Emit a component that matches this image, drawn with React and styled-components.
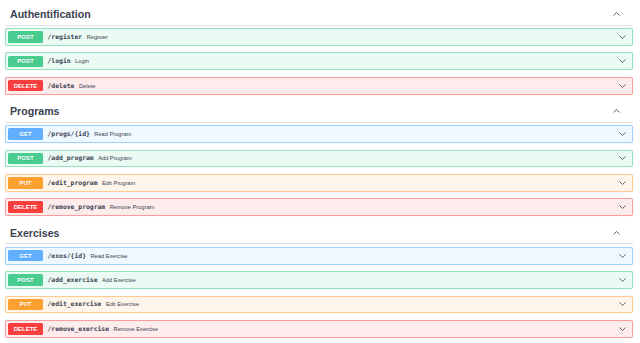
import styled, { createGlobalStyle } from "styled-components";

const GlobalStyle = createGlobalStyle`
  body {
    margin: 0;
    background: #ffffff;
    font-family: "Liberation Sans", Arial, sans-serif;
    color: #3b4151;
  }
`;

const METHODS = {
  GET: { color: "#61affe", border: "rgba(97, 175, 254, 0.55)", bg: "rgba(97, 175, 254, 0.1)" },
  POST: { color: "#49cc90", border: "rgba(73, 204, 144, 0.55)", bg: "rgba(73, 204, 144, 0.1)" },
  PUT: { color: "#fca130", border: "rgba(252, 161, 48, 0.5)", bg: "rgba(252, 161, 48, 0.1)" },
  DELETE: { color: "#f93e3e", border: "rgba(249, 62, 62, 0.45)", bg: "rgba(249, 62, 62, 0.1)" },
};

const sections = [
  {
    name: "Authentification",
    ops: [
      { method: "POST", path: "/register", desc: "Register" },
      { method: "POST", path: "/login", desc: "Login" },
      { method: "DELETE", path: "/delete", desc: "Delete" },
    ],
  },
  {
    name: "Programs",
    ops: [
      { method: "GET", path: "/progs/{id}", desc: "Read Program" },
      { method: "POST", path: "/add_program", desc: "Add Program" },
      { method: "PUT", path: "/edit_program", desc: "Edit Program" },
      { method: "DELETE", path: "/remove_program", desc: "Remove Program" },
    ],
  },
  {
    name: "Exercises",
    ops: [
      { method: "GET", path: "/exos/{id}", desc: "Read Exercise" },
      { method: "POST", path: "/add_exercise", desc: "Add Exercise" },
      { method: "PUT", path: "/edit_exercise", desc: "Edit Exercise" },
      { method: "DELETE", path: "/remove_exercise", desc: "Remove Exercise" },
    ],
  },
];

function Chevron({ up }) {
  return (
    <svg width="7" height="4" viewBox="0 0 7 4">
      <polyline
        points={up ? "0.5,3.5 3.5,0.5 6.5,3.5" : "0.5,0.5 3.5,3.5 6.5,0.5"}
        fill="none"
        stroke="#4b5060"
        strokeWidth="0.9"
      />
    </svg>
  );
}

export default function App() {
  return (
    <>
      <GlobalStyle />
      <Page>
        {sections.map((section) => (
          <Section key={section.name}>
            <TagHeader>
              <Title>{section.name}</Title>
              <ToggleUp>
                <Chevron up />
              </ToggleUp>
            </TagHeader>
            <OpList>
              {section.ops.map((op) => (
                <OpBlock key={op.path} $method={op.method}>
                  <Badge $method={op.method}>{op.method}</Badge>
                  <Path>{op.path}</Path>
                  <Desc>{op.desc}</Desc>
                  <ToggleDown>
                    <Chevron />
                  </ToggleDown>
                </OpBlock>
              ))}
            </OpList>
          </Section>
        ))}
      </Page>
    </>
  );
}

const Page = styled.div`
  padding: 4px 7px 0 5px;
`;

const Section = styled.section`
  display: flex;
  flex-direction: column;
`;

const TagHeader = styled.div`
  box-sizing: border-box;
  height: 21.5px;
  margin-bottom: 2.5px;
  padding-left: 5px;
  display: flex;
  align-items: center;
  border-bottom: 1px solid #e1e2e5;
`;

const Title = styled.h3`
  margin: 0;
  flex: 1;
  font-size: 10.6px;
  font-weight: 700;
  color: #3b4151;
`;

const ToggleUp = styled.span`
  display: flex;
  padding-right: 13px;
`;

const OpList = styled.div`
  display: flex;
  flex-direction: column;
`;

const OpBlock = styled.div`
  box-sizing: border-box;
  height: 17.8px;
  margin-bottom: 6.6px;
  padding-left: 2px;
  display: flex;
  align-items: center;
  border: 1px solid ${(p) => METHODS[p.$method].border};
  border-radius: 2px;
  background: ${(p) => METHODS[p.$method].bg};
  box-shadow: 0 0 1.5px rgba(0, 0, 0, 0.1);
`;

const Badge = styled.span`
  width: 35px;
  height: 11.5px;
  display: flex;
  align-items: center;
  justify-content: center;
  border-radius: 1.5px;
  background: ${(p) => METHODS[p.$method].color};
  color: #ffffff;
  font-size: 6px;
  font-weight: 700;
  text-shadow: 0 0.5px 0 rgba(0, 0, 0, 0.1);
`;

const Path = styled.span`
  padding: 0 4.5px;
  font-family: "DejaVu Sans Mono", "Liberation Mono", monospace;
  font-size: 6.4px;
  font-weight: 700;
  color: #3b4151;
`;

const Desc = styled.span`
  flex: 1;
  font-size: 5.7px;
  color: #3b4151;
`;

const ToggleDown = styled.span`
  display: flex;
  padding-right: 6px;
`;
